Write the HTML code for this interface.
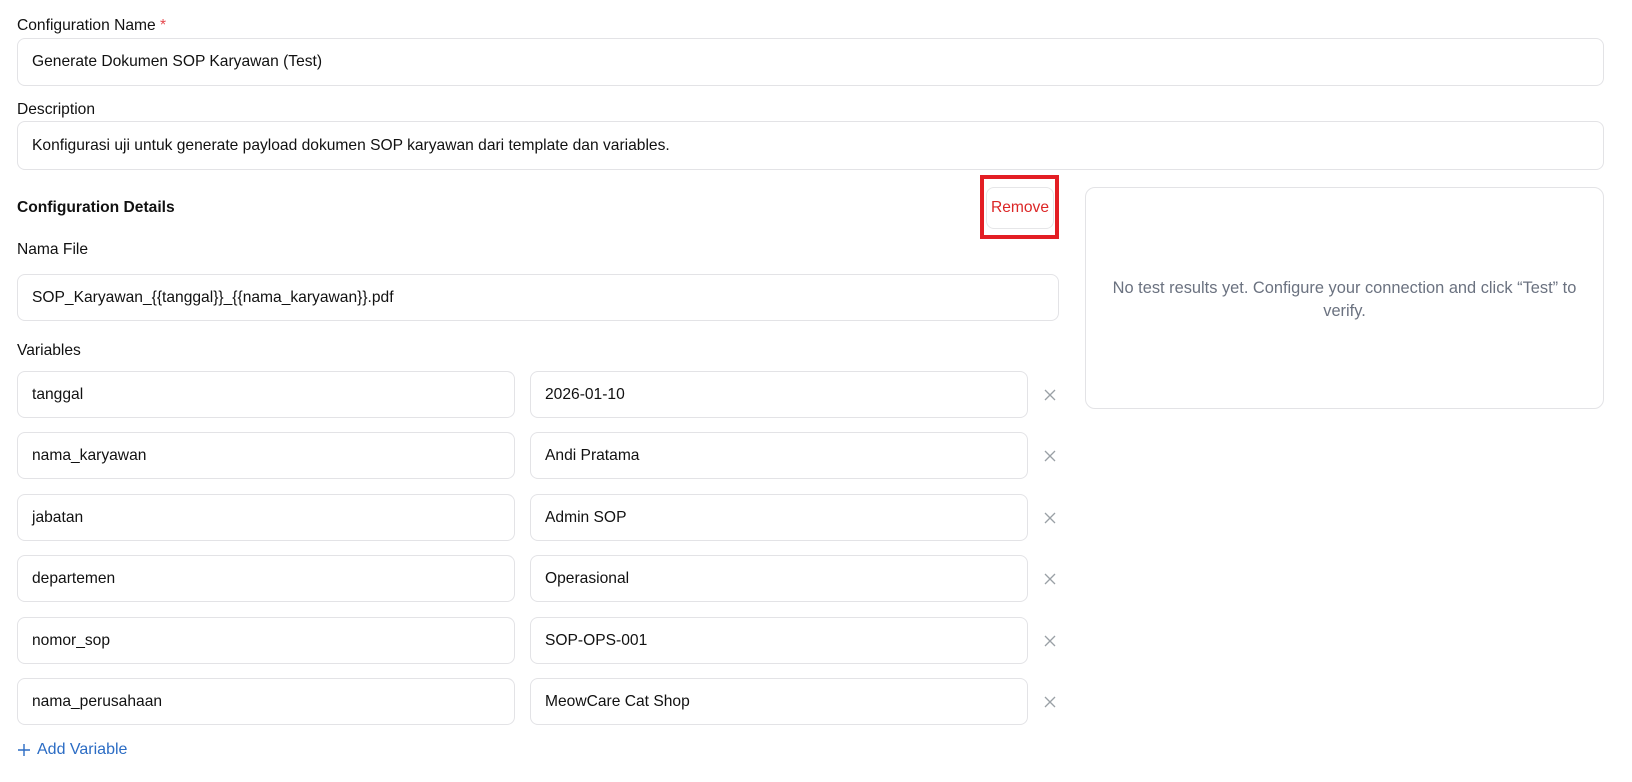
<!DOCTYPE html>
<html><head><meta charset="utf-8"><style>
*{box-sizing:border-box;margin:0;padding:0}
body{width:1632px;height:782px;background:#fff;font-family:"Liberation Sans",sans-serif;font-size:15.6px;color:#111;position:relative;overflow:hidden}
.a{position:absolute}
.inp{position:absolute;border:1px solid #e3e3e6;border-radius:8px;padding-left:14px;display:flex;align-items:center;background:#fff}
.lbl{position:absolute;left:17px}
.x{position:absolute;width:12px;height:12px}
</style></head><body>
<div class="lbl" style="top:17px">Configuration Name <span style="color:#e5484d">*</span></div>
<div class="inp" style="left:17px;top:38px;width:1587px;height:48px">Generate Dokumen SOP Karyawan (Test)</div>
<div class="lbl" style="top:101px">Description</div>
<div class="inp" style="left:17px;top:121px;width:1587px;height:49px">Konfigurasi uji untuk generate payload dokumen SOP karyawan dari template dan variables.</div>
<div class="lbl" style="top:199px;font-weight:bold">Configuration Details</div>
<div class="a" style="left:980px;top:175px;width:79px;height:64px;border:4px solid #e31e24"></div>
<div class="a" style="left:986px;top:187px;width:68px;height:42px;border:1px solid #e6e6e8;border-radius:8px;color:#dc2626;display:flex;align-items:center;justify-content:center">Remove</div>
<div class="a" style="left:1085px;top:187px;width:519px;height:222px;border:1px solid #e3e3e6;border-radius:10px;color:#6b7280;text-align:center;padding:89px 20px 0;line-height:23px;font-size:16.4px">No test results yet. Configure your connection and click “Test” to verify.</div>
<div class="lbl" style="top:241px">Nama File</div>
<div class="inp" style="left:17px;top:274px;width:1042px;height:47px">SOP_Karyawan_{{tanggal}}_{{nama_karyawan}}.pdf</div>
<div class="lbl" style="top:342px">Variables</div>
<svg width="0" height="0" style="position:absolute"><defs><g id="xx"><path d="M1 1L11 11M11 1L1 11" stroke="#9aa0a6" stroke-width="1.3" fill="none"/></g></defs></svg>
<div class="inp" style="left:17px;top:371px;width:498px;height:47px">tanggal</div><div class="inp" style="left:530px;top:371px;width:498px;height:47px">2026-01-10</div><svg class="x" style="left:1044px;top:389px"><use href="#xx"/></svg>
<div class="inp" style="left:17px;top:432px;width:498px;height:47px">nama_karyawan</div><div class="inp" style="left:530px;top:432px;width:498px;height:47px">Andi Pratama</div><svg class="x" style="left:1044px;top:450px"><use href="#xx"/></svg>
<div class="inp" style="left:17px;top:494px;width:498px;height:47px">jabatan</div><div class="inp" style="left:530px;top:494px;width:498px;height:47px">Admin SOP</div><svg class="x" style="left:1044px;top:512px"><use href="#xx"/></svg>
<div class="inp" style="left:17px;top:555px;width:498px;height:47px">departemen</div><div class="inp" style="left:530px;top:555px;width:498px;height:47px">Operasional</div><svg class="x" style="left:1044px;top:573px"><use href="#xx"/></svg>
<div class="inp" style="left:17px;top:617px;width:498px;height:47px">nomor_sop</div><div class="inp" style="left:530px;top:617px;width:498px;height:47px">SOP-OPS-001</div><svg class="x" style="left:1044px;top:635px"><use href="#xx"/></svg>
<div class="inp" style="left:17px;top:678px;width:498px;height:47px">nama_perusahaan</div><div class="inp" style="left:530px;top:678px;width:498px;height:47px">MeowCare Cat Shop</div><svg class="x" style="left:1044px;top:696px"><use href="#xx"/></svg>
<svg class="a" style="left:18px;top:744px" width="12" height="12"><path d="M6 0V12M0 6H12" stroke="#2b6cc4" stroke-width="1.4"/></svg>
<div class="a" style="left:37px;top:741px;color:#2b6cc4;font-size:16px">Add Variable</div>
</body></html>
